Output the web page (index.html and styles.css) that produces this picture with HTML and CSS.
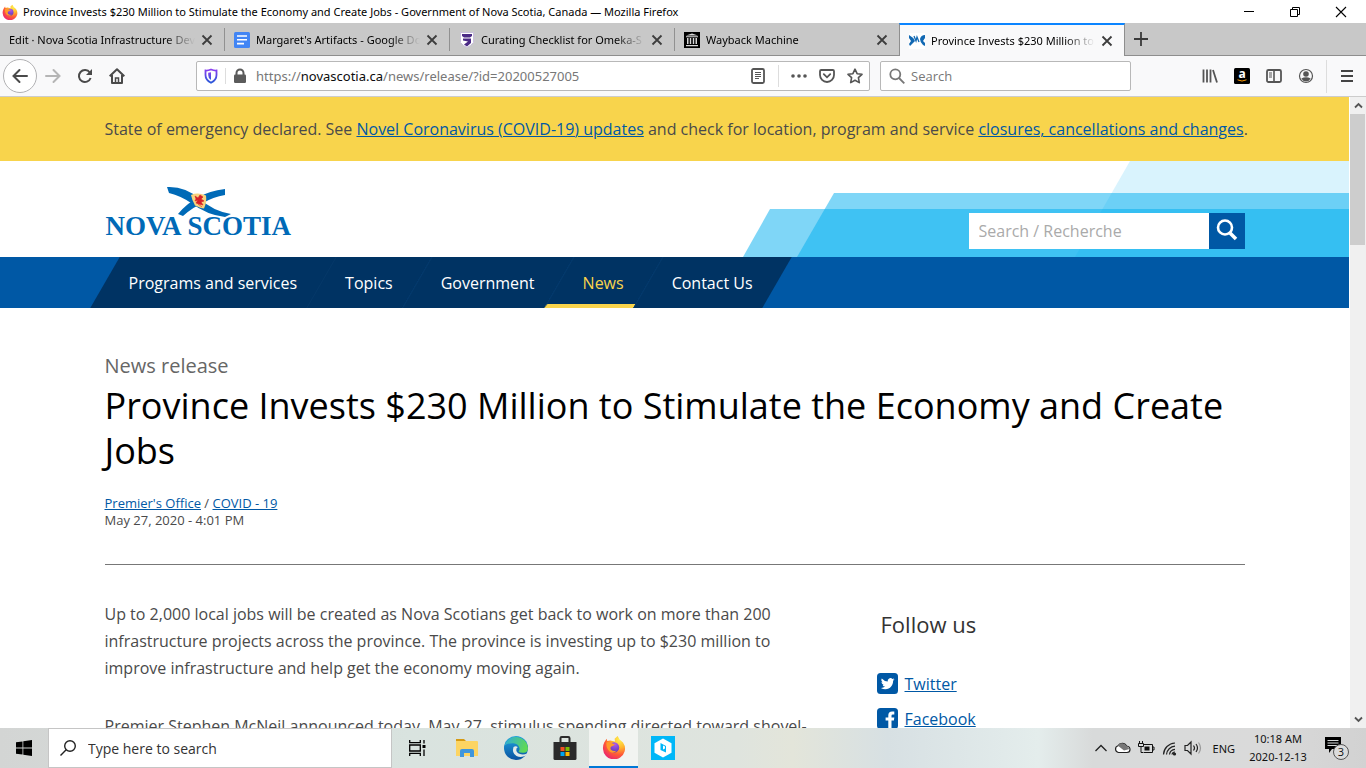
FILE: index.html
```html
<!DOCTYPE html>
<html lang="en">
<head>
<meta charset="utf-8">
<title>Province Invests $230 Million to Stimulate the Economy and Create Jobs</title>
<link rel="stylesheet" href="styles.css">
</head>
<body>
<svg class="defs" aria-hidden="true">
  <defs>
    <radialGradient id="fxBody" cx="0.75" cy="0.15" r="1"><stop offset="0" stop-color="#fff04f"/><stop offset="0.35" stop-color="#ffb62d"/><stop offset="0.65" stop-color="#ff5a35"/><stop offset="1" stop-color="#e6197d"/></radialGradient>
    <radialGradient id="fxGlobe" cx="0.6" cy="0.2" r="0.9"><stop offset="0" stop-color="#b05be8"/><stop offset="1" stop-color="#5233b5"/></radialGradient>
    <linearGradient id="edgeBase" x1="0" y1="0" x2="0" y2="1"><stop offset="0" stop-color="#1fa2e0"/><stop offset="1" stop-color="#0b53a0"/></linearGradient>
    <linearGradient id="edgeTop" x1="0" y1="0" x2="1" y2="0.3"><stop offset="0" stop-color="#2aa9e0"/><stop offset="1" stop-color="#5fd858"/></linearGradient>
    <linearGradient id="shieldFill" x1="0" y1="0" x2="0" y2="1"><stop offset="0" stop-color="#8a3ff0"/><stop offset="1" stop-color="#2858d8"/></linearGradient>
    <symbol id="close" viewBox="0 0 12 12"><path d="M1.5 1.5l9 9M10.5 1.5l-9 9" fill="none" stroke="#3d3d3d" stroke-width="1.8"/></symbol>
    <symbol id="firefox" viewBox="0 0 24 24">
      <path d="M2.2 7.5L4.6 3.8 5.3 6 8.2 5.4 13 6.5 12.6 3.8 15.6 1 17.6 4.4 21 7.6Q24 12 22.6 16.4A11 10.8 0 0 1 1 14Q.7 10.4 2.2 7.5z" fill="url(#fxBody)"/>
      <circle cx="12" cy="12.4" r="5.2" fill="url(#fxGlobe)"/>
      <path d="M4.4 7.4Q8.2 6 10.6 8.4L13 9.4Q11.2 10.8 9.4 11.4 7.6 13 9.4 15 11.8 17 15 15.2 12.2 19 8.2 17 4 14 4.4 7.4z" fill="#ff9a2a"/>
    </symbol>
    <symbol id="lens" viewBox="0 0 18 18"><circle cx="11" cy="7" r="5.3" fill="none" stroke="currentColor" stroke-width="1.4"/><path d="M7.2 10.8L1.5 16.5" stroke="currentColor" stroke-width="1.4"/></symbol>
  </defs>
</svg>

<header class="titlebar">
  <svg class="i16" aria-hidden="true"><use href="#firefox"/></svg>
  <span class="window-title">Province Invests $230 Million to Stimulate the Economy and Create Jobs - Government of Nova Scotia, Canada — Mozilla Firefox</span>
  <div class="window-controls">
    <button aria-label="Minimize"><svg width="12" height="12"><path d="M1 5.500h10" stroke="#000"/></svg></button>
    <button aria-label="Restore"><svg width="12" height="12" fill="none" stroke="#000"><path d="M1.500 3.500h7v7h-7zM3.500 3.500v-2h7v7h-2"/></svg></button>
    <button aria-label="Close"><svg width="12" height="12"><path d="M1 1l10 10M11 1L1 11" stroke="#000" stroke-width="1.1"/></svg></button>
  </div>
</header>

<nav class="tabs" aria-label="Browser tabs">
  <div class="tab">
    <span class="tab-title">Edit · Nova Scotia Infrastructure Dev</span>
    <button aria-label="Close tab"><svg class="i12"><use href="#close"/></svg></button>
  </div>
  <div class="tab">
    <svg class="i16" viewBox="0 0 16 16"><rect width="16" height="16" rx="1.500" fill="#4285f4"/><path d="M3 4h10M3 7.800h10M3 11.600h7" stroke="#fff" stroke-width="1.600"/></svg>
    <span class="tab-title">Margaret's Artifacts - Google Do</span>
    <button aria-label="Close tab"><svg class="i12"><use href="#close"/></svg></button>
  </div>
  <div class="tab">
    <svg class="i16" viewBox="0 0 16 16"><path d="M1.500 0.500h13v10l-3 3-3.500 2-3.500-2-3-3z" fill="#fff" stroke="#c9bfdc"/><path d="M3 2h10v2l-2 1.500H5L3 4zM4 6.500h8v4.500l-4 3.500-3-2 4-3-5-1z" fill="#4b2a86"/></svg>
    <span class="tab-title">Curating Checklist for Omeka-S</span>
    <button aria-label="Close tab"><svg class="i12"><use href="#close"/></svg></button>
  </div>
  <div class="tab">
    <svg class="i16" viewBox="0 0 16 16"><rect width="16" height="16"/><path d="M2 3.500l6-2 6 2zM2 4.200h12v1H2zM2 13h12v1.300H2zM3 6h1.500v6H3zM5.800 6h1.400v6H5.800zM8.800 6h1.400v6H8.800zM11.500 6H13v6h-1.500z" fill="#d8d8d8"/></svg>
    <span class="tab-title">Wayback Machine</span>
    <button aria-label="Close tab"><svg class="i12"><use href="#close"/></svg></button>
  </div>
  <div class="tab active">
    <svg class="i16" viewBox="0 0 16 16"><rect width="16" height="16" fill="#fff"/><path d="M0 2q4 2 6 6-2 2-5 5L0 11l2-3-2-3zM16 2q-4 0-5 4 0 3 3 6l2 1v-3l-2-2 2-3z" fill="#1168b3"/><path d="M5 3l2 5 1-4 2 5" fill="none" stroke="#1168b3" stroke-width="1.300"/></svg>
    <span class="tab-title">Province Invests $230 Million to</span>
    <button aria-label="Close tab"><svg class="i12"><use href="#close"/></svg></button>
  </div>
  <button class="new-tab" aria-label="New tab"><svg width="14" height="14"><path d="M7 0v14M0 7h14" stroke="#3a3a3a" stroke-width="1.800"/></svg></button>
</nav>

<div class="toolbar">
  <button class="back" aria-label="Back"><svg width="16" height="16" fill="none" stroke="#4a4a4a" stroke-width="2" stroke-linecap="round"><path d="M1.500 8H15M7.500 2l-6 6 6 6"/></svg></button>
  <button class="tool" aria-label="Forward"><svg width="16" height="16" fill="none" stroke="#b5b5b5" stroke-width="2" stroke-linecap="round"><path d="M1 8h13.500M8.500 2l6 6-6 6"/></svg></button>
  <button class="tool" aria-label="Reload"><svg width="16" height="16" fill="none" stroke="#4a4a4a" stroke-width="2"><path d="M12.800 4.500A6 6 0 1 0 13.600 10"/><path d="M15 1v6H9z" fill="#4a4a4a" stroke="none"/></svg></button>
  <button class="tool" aria-label="Home"><svg width="16" height="16" fill="none" stroke="#4a4a4a" stroke-width="2"><path d="M.7 8.300L8 1.200l7.300 7.100M3 7v8h10V7" stroke-linejoin="round"/><path d="M6.500 15v-5h3v5" stroke-width="1.500"/></svg></button>
  <div class="urlbar">
    <svg class="i16 shield" viewBox="0 0 16 16"><path d="M8 1.500q3 1.200 5.500 1v4.500q0 5-5.500 7.800Q2.500 12 2.500 7V2.500q2.500.2 5.500-1z" fill="none" stroke="url(#shieldFill)" stroke-width="1.800"/><path d="M8 4.300v7.800Q5.200 10.400 5.200 7V4.800z" fill="url(#shieldFill)"/></svg>
    <svg class="i16" viewBox="0 0 16 16"><rect x="2" y="6.500" width="12" height="8.500" rx="1.200" fill="#5b5b5b"/><path d="M4.500 7V5a3.500 3.500 0 0 1 7 0v2" fill="none" stroke="#5b5b5b" stroke-width="2"/></svg>
    <span class="url">https://<b>novascotia.ca</b>/news/release/?id=20200527005</span>
    <svg class="i16 reader" viewBox="0 0 16 16" fill="none" stroke="#555"><rect x="2" y="1" width="12" height="14" rx="1.500" stroke-width="1.800"/><path d="M5 4.500h6M5 6.500h6M5 8.500h6M5 10.500h4"/></svg>
    <svg class="i16 dots" viewBox="0 0 16 16" fill="#555"><circle cx="2" cy="8" r="1.800"/><circle cx="8" cy="8" r="1.800"/><circle cx="14" cy="8" r="1.800"/></svg>
    <svg class="i16" viewBox="0 0 16 16" fill="none" stroke="#555" stroke-width="1.800" stroke-linecap="round"><path d="M2.200 2h11.600q1.200 0 1.200 1.200V7A7 7 0 0 1 1 7V3.200Q1 2 2.200 2zM4.800 6.200L8 9.300l3.200-3.100"/></svg>
    <svg class="i16" viewBox="0 0 16 16" fill="none" stroke="#555" stroke-width="1.600" stroke-linejoin="round"><path d="M8 1.200l2.100 4.500 4.900.6-3.600 3.400.9 4.900L8 12.200l-4.300 2.400.9-4.900L1 6.300l4.900-.6z"/></svg>
  </div>
  <label class="searchbar">
    <svg class="i16" viewBox="0 0 16 16" fill="none" stroke="#777" stroke-width="1.800"><circle cx="6.300" cy="6.300" r="5"/><path d="M10 10l5.300 5.300"/></svg>
    <input type="text" placeholder="Search" aria-label="Search the web">
  </label>
  <div class="tools">
    <button aria-label="Library"><svg class="i16" viewBox="0 0 16 16" stroke="#555" stroke-width="1.800"><path d="M1.500 1.500v13M5 1.500v13M8.500 1.500v13M11 2l4 12.500"/></svg></button>
    <button aria-label="Amazon"><svg class="i16 amazon" viewBox="0 0 16 16"><rect width="16" height="16" rx="1.500"/><text x="8" y="10" text-anchor="middle" class="amz">a</text><path d="M3.500 11.800q4.500 2.500 9 0" fill="none" stroke="#f90"/></svg></button>
    <button aria-label="Sidebars"><svg class="i16" viewBox="0 0 16 16" fill="none" stroke="#555"><rect x="1" y="2" width="14" height="12" rx="1.500" stroke-width="1.800"/><path d="M8 2v12" stroke-width="1.600"/><path d="M3 5h3M3 7h3M3 9h3"/></svg></button>
    <button aria-label="Account"><svg class="i16" viewBox="0 0 16 16"><circle cx="8" cy="8" r="6.500" fill="none" stroke="#555" stroke-width="1.200"/><circle cx="8" cy="6" r="2.800" fill="#555"/><path d="M3.300 10.500q4.700-2.300 9.400 0Q11 13.500 8 13.500T3.300 10.500z" fill="#555"/></svg></button>
  </div>
  <button class="menu" aria-label="Menu"><svg width="12" height="12"><path d="M0 1h12M0 6h12M0 11h12" stroke="#444" stroke-width="1.800"/></svg></button>
</div>

<div class="viewport">
  <div class="page">
    <div class="notice"><p class="container">State of emergency declared. See <a href="#updates">Novel Coronavirus (COVID-19) updates</a> and check for location, program and service <a href="#closures">closures, cancellations and changes</a>.</p></div>

    <div class="masthead">
      <svg class="bands" width="606" height="96" aria-hidden="true">
        <path d="M27 48H606V96H0z" fill="#00aeef" fill-opacity=".5"/>
        <path d="M91 32H606V96H54z" fill="#00aeef" fill-opacity=".5"/>
        <path d="M387 0H606V96H332z" fill="#00aeef" fill-opacity=".15"/>
      </svg>
      <div class="container masthead-row">
        <a class="logo" href="#home" aria-label="Nova Scotia">
          <svg width="60" height="32" viewBox="0 0 60 32">
            <path d="M0 1Q18 0 33 13 46 25 64 28L58 31Q40 29 24 17 14 10 2 7z" fill="#006ab7"/>
            <path d="M58 3Q42 5 32 11 20 17 11 28l5 2Q26 21 36 17 46 11 58 9z" fill="#006ab7"/>
            <path d="M24 9Q31 6 39 9.500 40 16 37 22.500 33 22 28 19.500 25 14 24 9z" fill="#f8d27c"/>
            <path d="M28 10l3 2 2-3 3 2-2 2 3 2-3 1 2 3-4-1-3-1 2-3-3 1 1-2zM31 18l4 3" fill="#d71f27" stroke="#d71f27" stroke-width=".6"/>
          </svg>
          <span class="wordmark"><span>NOVA</span><span>SCOTIA</span></span>
        </a>
        <form class="site-search">
          <input type="text" placeholder="Search / Recherche" aria-label="Search / Recherche">
          <button type="button" aria-label="Search"><svg width="24" height="24" fill="none" stroke="#fff"><circle cx="10" cy="8.500" r="7" stroke-width="2.600"/><path d="M14.500 13.500L21 20" stroke-width="3.600"/></svg></button>
        </form>
      </div>
    </div>

    <nav class="site-nav" aria-label="Main">
      <ul class="container">
        <li><a href="#programs">Programs and services</a></li>
        <li><a href="#topics">Topics</a></li>
        <li><a href="#government">Government</a></li>
        <li class="current"><a href="#news">News</a></li>
        <li><a href="#contact">Contact Us</a></li>
      </ul>
    </nav>

    <main class="container">
      <p class="kicker">News release</p>
      <h1>Province Invests $230 Million to Stimulate the Economy and Create Jobs</h1>
      <p class="meta"><a href="#premier">Premier's Office</a> / <a href="#covid">COVID - 19</a><br>May 27, 2020 - 4:01 PM</p>
      <hr>
      <div class="columns">
        <article>
          <p>Up to 2,000 local jobs will be created as Nova Scotians get back to work on more than 200 infrastructure projects across the province. The province is investing up to $230 million to improve infrastructure and help get the economy moving again.</p>
          <p>Premier Stephen McNeil announced today, May 27, stimulus spending directed toward shovel-</p>
        </article>
        <aside>
          <h2>Follow us</h2>
          <ul>
            <li><svg width="21" height="21" viewBox="0 0 21 21"><rect width="21" height="21" rx="3.500" fill="#0058a5"/><path d="M17.500 6.200q-.8.400-1.600.5.900-.6 1.200-1.500-.8.500-1.700.7a2.800 2.800 0 0 0-4.700 2.500Q7 8.200 4.800 5.500A2.800 2.800 0 0 0 5.700 9.200q-.7 0-1.300-.3.100 2.100 2.300 2.700-.6.200-1.200.1.700 1.800 2.600 1.900Q6.200 15 3.900 14.900 6 16.200 8.300 16.200c5 0 8-4.300 7.800-8.500q.9-.7 1.400-1.500z" fill="#fff"/></svg><a href="#twitter">Twitter</a></li>
            <li><svg width="21" height="21" viewBox="0 0 21 21"><rect width="21" height="21" rx="3.500" fill="#0058a5"/><path d="M11.300 21v-8.500H8.600v-3h2.700V7.300q0-3.800 3.800-3.800h2.200v3h-1.500q-1.300 0-1.300 1.300v1.700h2.800l-.4 3h-2.400V21z" fill="#fff"/></svg><a href="#facebook">Facebook</a></li>
          </ul>
        </aside>
      </div>
    </main>
  </div>
  <div class="scrollbar" aria-hidden="true">
    <svg width="17" height="17" fill="none" stroke="#555" stroke-width="1.800"><path d="M5 10.500l3.500-3.500 3.500 3.500"/></svg>
    <div class="thumb"></div>
    <svg width="17" height="17" fill="none" stroke="#555" stroke-width="1.800"><path d="M5 6.500l3.500 3.500 3.500-3.500"/></svg>
  </div>
</div>

<footer class="taskbar">
  <button class="start" aria-label="Start"><svg width="16" height="16"><path d="M0 2.300l6.500-.9v6.100H0zM7.300 1.300L16 0v7.500H7.300zM0 8.400h6.500v6.200L0 13.700zM7.300 8.400H16V16l-8.700-1.200z"/></svg></button>
  <label class="task-search"><svg width="18" height="18"><use href="#lens"/></svg><input type="text" placeholder="Type here to search" aria-label="Type here to search"></label>
  <div class="apps">
    <button aria-label="Task view"><svg width="17" height="16" fill="none" stroke="#000" stroke-width="1.300"><path d="M.7 0v2.700h10.600V0M.7 5h10.600v6H.7zM.7 16v-2.700h10.600V16M15 0v3.500M15 9.500V16"/><path d="M13.500 5h3v3h-3z" fill="#000" stroke="none"/></svg></button>
    <button aria-label="File Explorer"><svg width="22" height="20"><path d="M0 1h8l2 2H0z" fill="#d69a12"/><path d="M0 3h21q1 0 1 1v14H0z" fill="#fcd462"/><path d="M4 19v-6q0-2 2-2h10q2 0 2 2v6h-4v-4H8v4z" fill="#3f96dc"/></svg></button>
    <button aria-label="Microsoft Edge"><svg width="24" height="24"><circle cx="12" cy="12" r="12" fill="url(#edgeBase)"/><path d="M.5 9.500A12 12 0 0 1 24 12q0 4.500-4.500 4.800-4 .2-5-1.300 1.600-1.800.8-4Q14 7.500 9.500 7.200 4 7 .5 9.500z" fill="url(#edgeTop)"/><path d="M9.500 11q-2 6 3 9 4.500 2.200 9.500-.5l1-2q-2.500 1.300-6 .8-5.500-1.300-4.600-5.500.5-1.200 1.500-1.500Q12 9.500 9.500 11z" fill="#e3eae8"/></svg></button>
    <button aria-label="Microsoft Store"><svg width="24" height="25"><path d="M7.500 6V2.200q0-1.200 1.200-1.200h6.600q1.200 0 1.200 1.200V6" fill="none" stroke="#2b2b2b" stroke-width="2"/><path d="M.5 6h23v16.500q0 1.500-1.500 1.500H2Q.5 24 .5 22.500z" fill="#2b2b2b"/><path d="M7.500 11h4v4h-4z" fill="#f25022"/><path d="M12.500 11h4v4h-4z" fill="#7fba00"/><path d="M7.500 16h4v4h-4z" fill="#00a4ef"/><path d="M12.500 16h4v4h-4z" fill="#ffb900"/></svg></button>
    <button class="running" aria-label="Firefox"><svg width="24" height="24"><use href="#firefox"/></svg></button>
    <button aria-label="Assistant"><svg width="24" height="24"><path d="M0 0h24v24H0z" fill="#00b7f8"/><path d="M12 2.500l8.500 4.800v9.400L12 21.500l-8.500-4.800V7.300z" fill="#fff"/><path d="M9.500 7l5.500 3v6.500L9.500 14z" fill="#00b7f8"/><path d="M12 9.500v4l2-1v-2z" fill="#fff"/></svg></button>
  </div>
  <div class="tray">
    <svg width="12" height="16" fill="none" stroke="#222" stroke-width="1.300"><path d="M.5 11L6 5.500l5.500 5.500"/></svg>
    <svg width="17" height="16"><path d="M4.500 12.500a3.500 3.500 0 0 1-.5-6.800A4.800 4.800 0 0 1 12.500 6q3.500.5 3.500 3.500 0 3-3 3z" fill="#fff" stroke="#222" stroke-width="1.200"/><path d="M4 5.700A4.800 4.800 0 0 1 12.500 6L15.500 9 10 10.500z" fill="#777"/></svg>
    <svg width="17" height="16" fill="none" stroke="#111"><path d="M5.500 4.500h9v8h-9M14.500 7h1.500v3h-1.500M1.500 1v2M4.500 1v2M.5 3.500h5v3h-5zM3 6.500v6h2"/><path d="M6.500 6.500h5v4h-5z" fill="#111" stroke="none"/></svg>
    <svg width="15" height="16" fill="none" stroke="#222" stroke-width="1.200"><path d="M1.500 14.500A12 12 0 0 1 13 3M4.500 14.500A9 9 0 0 1 13 6.200M7.500 14.500A6 6 0 0 1 13 9.300M10 14.500a3 3 0 0 1 3-2.500"/><circle cx="12.500" cy="14" r="1" fill="#111"/></svg>
    <svg width="18" height="16" fill="none" stroke="#222" stroke-width="1.200"><path d="M1 5.500h2.500L7 2v12L3.500 10.500H1zM9.500 5.500q2 2.500 0 5M12 4q3 4 0 8"/><path d="M14.500 2.500q4 5.500 0 11" stroke="#999"/></svg>
    <span class="lang">ENG</span>
    <time datetime="2020-12-13T10:18">10:18 AM<br>2020-12-13</time>
    <svg class="action" width="26" height="26"><path d="M1 2h16v12H8l-3 4v-4H1z"/><path d="M3.500 5.500h11M3.500 8h11M3.500 10.500h11" stroke="#d5d8d8"/><circle cx="17" cy="17" r="7.500" fill="#dcdcdc" stroke="#555"/><text x="17" y="21" text-anchor="middle" class="count">3</text></svg>
  </div>
</footer>
</body>
</html>
```

FILE: styles.css
```css
* { box-sizing: border-box; }
body {
  margin: 0;
  height: 100vh;
  display: flex;
  flex-direction: column;
  overflow: hidden;
  font-family: "Open Sans", "Noto Sans", sans-serif;
  background: #fff;
}
button { border: 0; padding: 0; background: none; display: flex; align-items: center; justify-content: center; }
input { border: 0; outline: 0; padding: 0; background: none; font-family: inherit; min-width: 0; }
svg { display: block; flex: none; }
p, h1, h2, ul { margin: 0; padding: 0; font-weight: 400; }
ul { list-style: none; }
.defs { position: absolute; width: 0; height: 0; }
.i16 { width: 16px; height: 16px; }
.i12 { width: 12px; height: 12px; }

/* Window title */
.titlebar { flex: none; height: 23px; display: flex; align-items: center; padding: 0 2px; gap: 5px; font-family: "Noto Sans", sans-serif; font-size: 11px; color: #000; }
.window-title { white-space: nowrap; }
.window-controls { margin-left: auto; display: flex; }
.window-controls button { width: 46px; height: 21px; }

/* Tabs */
.tabs { flex: none; height: 33px; display: flex; background: #c8c8c8; border-bottom: 1px solid #8e8e8e; font-family: "Noto Sans", sans-serif; }
.tab { position: relative; width: 225px; display: flex; align-items: center; gap: 6px; padding: 2px 12px 0 9px; font-size: 11px; line-height: 18px; }
.tab + .tab::before { content: ""; position: absolute; left: -1px; top: 5px; bottom: 4px; border-left: 1px solid #919191; }
.tab-title { flex: 1; overflow: hidden; white-space: nowrap; mask-image: linear-gradient(to right, #000 calc(100% - 30px), transparent); }
.tab.active { height: 33px; width: 226px; margin-left: -1px; padding: 0 11px 0 9px; background: #f9f9fa; border: 1px solid #8e8e8e; border-width: 0 1px; border-top: 2px solid #0a84ff; }
.tab.active::before { display: none; }
.new-tab { width: 32px; }

/* Navigation toolbar */
.toolbar { flex: none; height: 41px; display: flex; align-items: center; background: #f9f9fa; border-bottom: 1px solid #ccc; padding-left: 3px; }
.back { width: 34px; height: 34px; border: 1px solid #b1b1b3; border-radius: 50%; background: #fff; }
.tool { width: 32px; height: 32px; }
.urlbar { flex: 1; height: 30px; margin-left: 63px; display: flex; align-items: center; gap: 12px; padding: 0 6px; border: 1px solid #b8b8b8; border-radius: 2px; background: #fff; font-family: "Noto Sans", sans-serif; font-size: 13px; color: #777; }
.shield { box-sizing: content-box; padding-right: 6px; border-right: 1px solid #ddd; margin-right: -6px; }
.url { flex: 1; white-space: nowrap; margin-left: -4px; }
.url b { font-weight: 400; color: #0c0c0d; }
.reader { box-sizing: content-box; padding-right: 12px; height: 22px; border-right: 1px solid #ddd; }
.searchbar { width: 251px; height: 30px; margin: 0 68px 0 10px; display: flex; align-items: center; gap: 6px; padding: 0 8px; border: 1px solid #b8b8b8; border-radius: 2px; background: #fff; }
.searchbar input { flex: 1; font-size: 13px; }
.searchbar input::placeholder { color: #777; opacity: 1; }
.tools { display: flex; gap: 16px; padding: 0 12px 0 3px; }
.menu { width: 40px; height: 33px; border-left: 1px solid #ddd; }
.amazon { overflow: visible; }
.amz { font: bold 12px "Open Sans", sans-serif; fill: #fff; }

/* Page */
.viewport { flex: 1; min-height: 0; display: flex; }
.page { flex: 1; overflow: hidden; color: #4a4a4a; font-size: 16px; }
.page a { color: #0058a5; text-decoration-thickness: 1px; }
.container { width: 100%; max-width: 1140px; margin: 0 auto; }
.notice { background: #f8d44c; padding: 20px 0; line-height: 24px; white-space: nowrap; }
.masthead { position: relative; height: 96px; }
.bands { position: absolute; right: 0; top: 0; }
.masthead-row { position: relative; display: flex; justify-content: space-between; height: 100%; }
.logo { padding: 25px 0 0 1px; text-decoration: none; }
.logo > svg { margin-left: 61px; overflow: visible; }
.wordmark { display: flex; gap: 6px; margin-top: -6px; font: bold 27px/28px "Liberation Serif", serif; color: #006ab7; }
.site-search { display: flex; width: 276px; height: 36px; margin-top: 52px; }
.site-search input { flex: 1; background: #fff; padding: 0 10px; font-size: 16px; }
.site-search input::placeholder { color: #aaa; opacity: 1; }
.site-search button { width: 36px; background: #0058a5; }

.site-nav { background: #0058a5; }
.site-nav ul { display: flex; }
.site-nav li { position: relative; }
.site-nav li::before { content: ""; position: absolute; inset: 0; background: #003363; transform: skewX(-30deg); }
.site-nav li + li::before { border-left: 1px solid #053969; }
.site-nav .current::before { border-bottom: 4px solid #f9d44c; }
.site-nav a { position: relative; display: block; padding: 1px 24px 0; line-height: 50px; color: #fff; text-decoration: none; }
.site-nav .current a { color: #f9d44c; }

main { padding-top: 43px; }
.kicker { font-size: 20px; line-height: 30px; color: #666; }
h1 { font-size: 36px; line-height: 45px; color: #000; padding-top: 2px; }
.meta { margin-top: 22px; font-size: 13px; line-height: 17px; }
hr { margin: 35px 0 36px; border: 0; border-top: 1px solid #777; }
.columns { display: flex; justify-content: space-between; }
article { width: 704px; line-height: 27px; }
article p + p { margin-top: 31px; }
aside { width: 368px; }
h2 { margin-top: 8px; padding-left: 4px; font-size: 22px; line-height: 30px; color: #333; }
aside ul { margin-top: 27px; }
aside li { display: flex; align-items: center; gap: 7px; height: 35px; }

.scrollbar { width: 17px; display: flex; flex-direction: column; background: #f0f0f0; border-left: 1px solid #fff; }
.thumb { height: 131px; background: #cdcdcd; margin-bottom: auto; margin-right: 1px; }

/* Taskbar */
.taskbar { flex: none; height: 40px; display: flex; background: linear-gradient(to right, #d3d5d4, #d9e3df 30%, #dfe4de 54%, #e3e5da 58%, #d7e0e3 65%, #e4edec 76%, #d8dada 80%, #dadada 92%, #d2d2d2); }
.start { width: 48px; }
.task-search { width: 344px; display: flex; align-items: center; gap: 11px; padding-left: 10px; background: #fff; border: 1px solid #c5c5c5; color: #222; }
.task-search input { flex: 1; font-size: 14px; }
.task-search input::placeholder { color: #333; opacity: 1; }
.apps { display: flex; padding-left: 1px; }
.apps button { width: 49px; }
.apps .running { background: #f2f4f1; border-bottom: 2px solid #0078d7; }
.tray { margin-left: auto; display: flex; align-items: center; gap: 7px; padding-right: 16px; font-family: "Noto Sans", sans-serif; font-size: 11px; color: #111; }
.lang { margin-left: 4px; }
.tray time { margin-left: 4px; width: 64px; text-align: center; line-height: 18px; }
.action { margin-left: 7px; }
.count { font: 11px "Open Sans", sans-serif; fill: #111; }
```
